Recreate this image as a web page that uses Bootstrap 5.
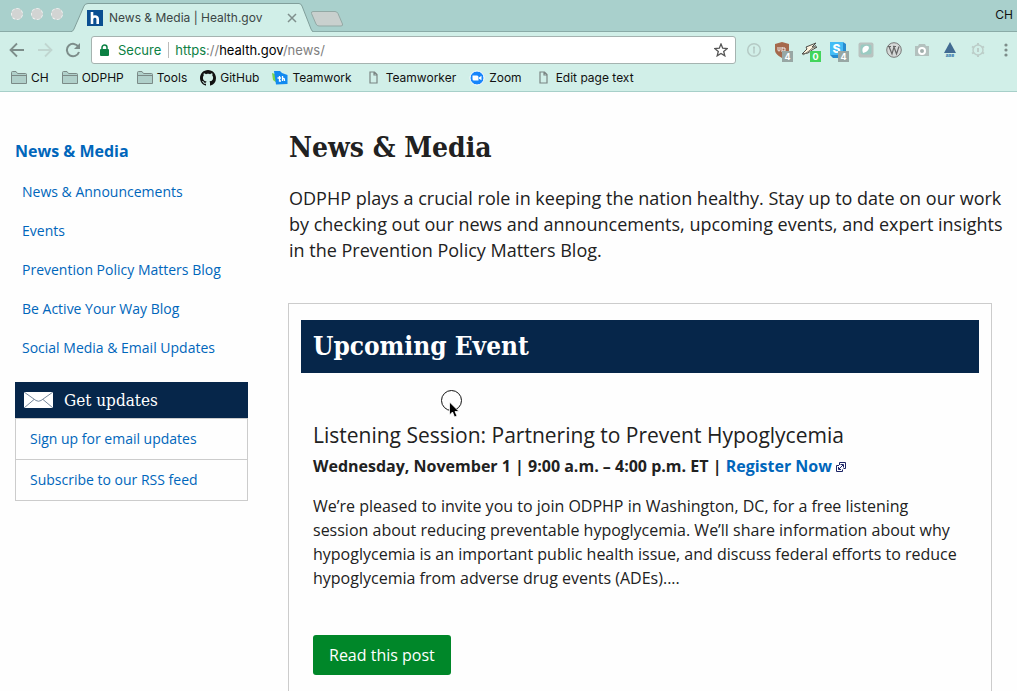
<!DOCTYPE html>
<html lang="en">
<head>
<meta charset="utf-8">
<meta name="viewport" content="width=device-width, initial-scale=1">
<title>News &amp; Media | Health.gov</title>
<link href="https://cdn.jsdelivr.net/npm/bootstrap@5.3.0/dist/css/bootstrap.min.css" rel="stylesheet">
<style>
:root{--navy:#06264a;--link:#0066bb;--mint:#d1efe8;--strip:#a9d0cc;--rule:#ccc;--secure:#0b8043;--serif:"DejaVu Serif Condensed","DejaVu Serif",serif}
body{font-family:"Open Sans","Noto Sans",sans-serif;color:#212121;background:#fefefe}
a{color:var(--link);text-decoration:none}
svg{display:block;flex:none}
.chrome{font-family:Inter,Roboto,sans-serif;font-size:12px;line-height:16px;background:var(--mint);border-bottom:1px solid #a7cfc9;color:#111}
.chrome button{border:0;background:none;padding:0;color:inherit}
.tabstrip{height:32px;background:linear-gradient(var(--strip) 31px,#8aaba7 31px)}
.lights{gap:8px;padding:8px 8px 0 11px}
.chrome .lights button{width:12px;height:12px;border-radius:50%;background:#d2d4d3;border:1px dashed #f1f1f1}
.tab-wrap{width:243px;height:32px}
.tab-wrap .shape{position:absolute;inset:0}
.tab-body{position:relative;padding:10px 17px 0 16px;gap:6px;color:#3b4645}
.chrome .newtab{padding-top:10px;margin-left:-4px}
.profile{padding-top:7px}
.toolbar{height:36px;padding:4px 3px 4px 9px;gap:10px}
.nav-btns{gap:12px;width:72px}
.omnibox{height:28px;background:#fff;border:1px solid #a5b3b0;border-radius:3px;padding:0 7px;font-size:13px}
.secure{color:var(--secure);padding-right:7px;border-right:1px solid #bbb;margin-right:6px}
.url{color:#808080}
.scheme{color:var(--secure)}
.exts{gap:12px}
.bookmarks{height:23px;padding:0 11px 4px;gap:13px}
.bookmarks a{color:#111;gap:4px}
.page-area{scrollbar-width:none}
.layout{padding:39px 25px 0 15px;gap:40px}
.side{width:233px;flex:none;padding-top:8px}
.side h2{font-size:16px;line-height:24px;font-weight:700;margin:0 0 18px}
.side ul{padding-left:7px;margin:0 0 24px;font-size:14px;line-height:21px}
.side li{margin-bottom:18px}
.side li:last-child{margin:0}
.updates{border:1px solid var(--rule);border-width:0 0 1px}
.updates h3{font:500 17px/36px var(--serif);background:var(--navy);color:#fff;margin:0;padding:0 9px;gap:11px}
.updates a{display:block;font-size:14px;line-height:40px;padding:0 14px;border:1px solid var(--rule);border-bottom:0}
h1{font:700 28px/34px var(--serif);margin:0 0 20px;padding-left:1px}
.intro{font-size:18px;line-height:26px;margin:0 -14px 40px 0;padding-left:1px}
.event{border:1px solid var(--rule);padding:16px 12px 40px}
.event h2{font:700 26px/53px var(--serif);background:var(--navy);color:#fff;margin:0 0 46px;padding:0 12px}
.event-body{padding:0 12px}
.event h3{font-size:21px;line-height:32px;font-weight:400;margin:0 0 3px}
.when{font-weight:700;font-size:16px;line-height:24px;margin:0 0 16px}
.blurb{margin:0 0 45px;line-height:24px}
.read{background:#008729;color:#fff;border-radius:3px;padding:8px 16px;line-height:24px;font-weight:500;border:0}
.pointer{position:absolute;left:152px;top:86px}
</style>
</head>
<body class="vh-100 overflow-hidden d-flex flex-column">
<header class="chrome">
  <div class="tabstrip d-flex">
    <div class="lights d-flex"><button aria-label="Close"></button><button aria-label="Minimize"></button><button aria-label="Maximize"></button></div>
    <div class="tab-wrap position-relative">
      <svg class="shape" width="242" height="32" viewBox="0 0 242 32"><path d="M0 32C1 32 2 31 3 29L13 6Q14 3.500 17 3.500H228Q230 3.500 231 6L240 29Q241 31.500 242 32Z" fill="#d1efe8"/><path d="M0 31.500C1 31.500 2 31 3 29L13 6Q14 3.500 17 3.500H228Q230 3.500 231 6L240 29Q241 31.500 242 31.500" fill="none" stroke="#819f9b"/></svg>
      <div class="tab-body d-flex align-items-center">
        <svg width="16" height="16" viewBox="0 0 16 16"><rect width="16" height="16" fill="#0b4f91"/><path d="M5 2v12M5 9Q5.500 6.500 8 6.500T10.700 9V14" fill="none" stroke="#fff" stroke-width="2.600"/></svg>
        <span>News &amp; Media | Health.gov</span>
        <button class="ms-auto" aria-label="Close tab"><svg width="10" height="10" viewBox="0 0 10 10"><path d="M1 1l8 8M9 1L1 9" stroke="#7f8f8c" stroke-width="1.500"/></svg></button>
      </div>
    </div>
    <button class="newtab align-self-start" aria-label="New tab"><svg width="34" height="17" viewBox="0 0 34 17"><path d="M3 1.500H25Q27 1.500 28 3.500L32.500 14Q33 16 31 16H9Q7 16 6 14L1.500 3.500Q1 1.500 3 1.500Z" fill="#c9d0ce" stroke="#93a9a5"/></svg></button>
    <span class="profile ms-auto pe-1">CH</span>
  </div>
  <div class="toolbar d-flex align-items-center">
    <div class="nav-btns d-flex">
      <button aria-label="Back"><svg width="16" height="16" viewBox="0 0 16 16"><path d="M15 8H2M8 1.500L1.500 8L8 14.500" fill="none" stroke="#7d8d8a" stroke-width="1.800"/></svg></button>
      <button aria-label="Forward"><svg width="16" height="16" viewBox="0 0 16 16"><path d="M1 8H14M8 1.500L14.500 8L8 14.500" fill="none" stroke="#c0d6d0" stroke-width="1.800"/></svg></button>
      <button aria-label="Reload"><svg width="16" height="16" viewBox="0 0 16 16"><path d="M13.500 5A6.200 6.200 0 1 0 14 10" fill="none" stroke="#7d8d8a" stroke-width="2"/><path d="M15 1V7H9Z" fill="#7d8d8a"/></svg></button>
    </div>
    <div class="omnibox d-flex align-items-center flex-grow-1">
      <svg class="me-2" width="11" height="12" viewBox="0 0 11 12"><rect x="1" y="5" width="9" height="7" rx="1" fill="#0b8043"/><path d="M3 5V3.500a2.500 2.500 0 0 1 5 0V5" fill="none" stroke="#0b8043" stroke-width="1.500"/></svg>
      <span class="secure">Secure</span>
      <span class="url"><span class="scheme">https</span>://<span class="text-black">health.gov</span>/news/</span>
      <button class="ms-auto" aria-label="Bookmark this page"><svg width="14" height="14" viewBox="0 0 14 14"><path d="M7 1L8.700 5.200L13.200 5.500L9.700 8.400L10.800 12.800L7 10.400L3.200 12.800L4.300 8.400L.8 5.500L5.300 5.200Z" fill="none" stroke="#555" stroke-width="1.300"/></svg></button>
    </div>
    <div class="exts d-flex">
      <button aria-label="Password manager"><svg width="16" height="16" viewBox="0 0 16 16"><circle cx="8" cy="8" r="6.300" fill="none" stroke="#b5cac5" stroke-width="1.500"/><path d="M8 4.500v7M7 5.500h2" fill="none" stroke="#b5cac5" stroke-width="1.500"/></svg></button>
      <button aria-label="Ad blocker"><svg width="16" height="16" viewBox="0 0 16 16" overflow="visible"><path d="M1 2L8 0L15 2V8C15 12 11 14 8 16C5 14 1 12 1 8Z" fill="#a5694c"/><path d="M4 5v3q0 1 1 1t1-1V5M8 5v5M8 6h3v3H8" fill="none" stroke="#eee"/><rect x="8" y="9" width="11" height="11" fill="#98a7a4"/><text x="13.500" y="18" text-anchor="middle" font-size="9" font-weight="700" fill="#fff">4</text></svg></button>
      <button aria-label="Accessibility checker"><svg width="16" height="16" viewBox="0 0 16 16" overflow="visible"><path d="M0 12L5 7L4 5L14 1L10 5L15 5L10 8L6 11Z" fill="#fff5df" stroke="#4c4c47"/><path d="M1 13L7 9L14 3" fill="none" stroke="#77736a"/><rect x="8" y="9" width="11" height="11" fill="#43d55c"/><text x="13.500" y="18" text-anchor="middle" font-size="9" font-weight="700" fill="#fff">0</text></svg></button>
      <button aria-label="Stylesheet tool"><svg width="16" height="16" viewBox="0 0 16 16" overflow="visible"><path d="M0 0H13L16 2V16H3L0 13Z" fill="#278bd0"/><rect width="13" height="13" fill="#44bcf5"/><text x="6.500" y="11" text-anchor="middle" font-size="12" font-weight="800" fill="#fff">S</text><rect x="8" y="9" width="11" height="11" fill="#98a7a4"/><text x="13.500" y="18" text-anchor="middle" font-size="9" font-weight="700" fill="#fff">4</text></svg></button>
      <button aria-label="Note clipper"><svg width="16" height="16" viewBox="0 0 16 16"><rect x=".5" y=".5" width="15" height="15" rx="2" fill="#b9c3c0"/><rect x="2.500" y="2.500" width="11" height="10" rx="2" fill="#9acbc2"/><path d="M5 11Q3 6 7 4Q11 3 11 6Q10 10 5 11Z" fill="#fff"/></svg></button>
      <button aria-label="WordPress"><svg width="16" height="16" viewBox="0 0 16 16"><circle cx="8" cy="8" r="7.300" fill="#d5d8d7" stroke="#777"/><path d="M3 4.500L6 12L8 5L10.500 12L13 4.500M2 4.500h3M7 4.500h3" fill="none" stroke="#666" stroke-width="1.200"/></svg></button>
      <button aria-label="Screenshot"><svg width="16" height="16" viewBox="0 0 16 16"><path d="M1 4H4L5 2H11L12 4H15V14H1Z" fill="#b3c1be"/><circle cx="8" cy="9" r="3" fill="#a1afac" stroke="#fff" stroke-width="2"/></svg></button>
      <button aria-label="axe"><svg width="16" height="16" viewBox="0 0 16 16"><path d="M8 0L14 11H2Z" fill="#416b92"/><text x="8" y="15" text-anchor="middle" font-size="5" font-weight="700" fill="#2a6fa8">axe</text></svg></button>
      <button aria-label="Extension settings"><svg width="16" height="16" viewBox="0 0 16 16"><circle cx="8" cy="8" r="5" fill="none" stroke="#bccdc8" stroke-width="1.500"/><path d="M8 1v2M8 13v2M2 4.500l2 1.200M12 10.300l2 1.200M2 11.500l2-1.200M12 5.700l2-1.200M8 6v4" stroke="#bccdc8" stroke-width="2"/></svg></button>
      <button aria-label="Menu"><svg width="16" height="16" viewBox="0 0 16 16"><g fill="#7d8d8a"><circle cx="8" cy="3" r="1.600"/><circle cx="8" cy="8" r="1.600"/><circle cx="8" cy="13" r="1.600"/></g></svg></button>
    </div>
  </div>
  <svg width="0" height="0" class="position-absolute"><symbol id="folder" viewBox="0 0 16 13"><path d="M.5 12.500V1.500Q.5 .5 1.500 .5H5L6.500 2.500H14.500Q15.500 2.500 15.500 3.500V12.500Z" fill="#b0d0ca" stroke="#7b8a87"/><path d="M1 4.500H15" stroke="#7b8a87"/></symbol><symbol id="sheet" viewBox="0 0 9 13"><path d="M1 1H5.500L8 3.500V12H1ZM5 1V4H8" fill="none" stroke="#7b8583" stroke-width="1.200"/></symbol></svg>
  <nav class="bookmarks d-flex align-items-center" aria-label="Bookmarks">
    <a href="#" class="d-flex align-items-center"><svg width="16" height="13"><use href="#folder"/></svg>CH</a>
    <a href="#" class="d-flex align-items-center"><svg width="16" height="13"><use href="#folder"/></svg>ODPHP</a>
    <a href="#" class="d-flex align-items-center"><svg width="16" height="13"><use href="#folder"/></svg>Tools</a>
    <a href="#" class="d-flex align-items-center"><svg width="16" height="16" viewBox="0 0 16 16"><path fill="#111" d="M8 0C3.580 0 0 3.580 0 8c0 3.540 2.290 6.530 5.470 7.590.4.070.55-.17.55-.38 0-.19-.01-.82-.01-1.490-2.010.37-2.530-.49-2.690-.94-.09-.23-.48-.94-.82-1.130-.28-.15-.68-.52-.01-.53.63-.01 1.080.58 1.230.82.72 1.210 1.870.87 2.330.66.07-.52.28-.87.51-1.070-1.780-.2-3.640-.89-3.640-3.950 0-.87.31-1.590.82-2.150-.08-.2-.36-1.020.08-2.120 0 0 .67-.21 2.200.82.64-.18 1.320-.27 2-.27s1.360.09 2 .27c1.530-1.040 2.200-.82 2.200-.82.44 1.100.16 1.920.08 2.120.51.56.82 1.270.82 2.150 0 3.070-1.870 3.750-3.650 3.950.29.25.54.73.54 1.480 0 1.070-.01 1.930-.01 2.200 0 .21.15.46.55.38A8 8 0 0 0 16 8c0-4.420-3.580-8-8-8z"/></svg>GitHub</a>
    <a href="#" class="d-flex align-items-center"><svg width="16" height="16" viewBox="0 0 16 16"><path d="M0 3L3 4L5 13L1 10Z" fill="#7ad34c"/><path d="M2 1H8L10 3L15.500 5V14L4 14.500Z" fill="#118af0"/><path d="M7.500 6v5h1.500M5.500 8h3.500M10.500 6v5M10.500 9q2-2 2 2" fill="none" stroke="#fff" stroke-width="1.300"/></svg>Teamwork</a>
    <a href="#" class="d-flex align-items-center"><svg class="mx-1" width="9" height="13"><use href="#sheet"/></svg>Teamworker</a>
    <a href="#" class="d-flex align-items-center"><svg width="16" height="16" viewBox="0 0 16 16"><circle cx="8" cy="8" r="7" fill="#1785fb" stroke="#fff"/><path d="M3.500 5.500H8Q9.500 5.500 9.500 7V10.500H5Q3.500 10.500 3.500 9ZM10 7.500L12.500 5.700V10.300L10 8.800Z" fill="#fff"/></svg>Zoom</a>
    <a href="#" class="d-flex align-items-center"><svg class="mx-1" width="9" height="13"><use href="#sheet"/></svg>Edit page text</a>
  </nav>
</header>
<div class="page-area flex-fill overflow-auto">
  <div class="layout d-flex">
    <aside class="side">
      <h2><a href="#">News &amp; Media</a></h2>
      <ul class="list-unstyled">
        <li><a href="#">News &amp; Announcements</a></li>
        <li><a href="#">Events</a></li>
        <li><a href="#">Prevention Policy Matters Blog</a></li>
        <li><a href="#">Be Active Your Way Blog</a></li>
        <li><a href="#">Social Media &amp; Email Updates</a></li>
      </ul>
      <div class="updates">
        <h3 class="d-flex align-items-center"><svg width="29" height="16" viewBox="0 0 29 16"><rect width="29" height="16" fill="#fff"/><path d="M0 0L12 8.500Q14.500 10 17 8.500L29 0M0 16L10 7.500M29 16L19 7.500" fill="none" stroke="#687b91" stroke-width=".9"/></svg>Get updates</h3>
        <a href="#">Sign up for email updates</a>
        <a href="#">Subscribe to our RSS feed</a>
      </div>
    </aside>
    <main class="flex-fill">
      <h1>News &amp; Media</h1>
      <p class="intro">ODPHP plays a crucial role in keeping the nation healthy. Stay up to date on our work by checking out our news and announcements, upcoming events, and expert insights in the Prevention Policy Matters Blog.</p>
      <section class="event position-relative">
        <h2>Upcoming Event</h2>
        <div class="event-body">
          <h3>Listening Session: Partnering to Prevent Hypoglycemia</h3>
          <p class="when">Wednesday, November 1 | 9:00 a.m. – 4:00 p.m. ET | <a href="#">Register Now <svg class="d-inline-block align-baseline" width="10" height="10" viewBox="0 0 10 10"><path d="M3.500 .5H9.500V6.500H7.500M3.500 .5V3M.5 3.500H3M.5 3.500V9.500H6.500V7.500M3 7L7 3M4.500 2.500H7.500V5.500M2.500 5V7.500H5" fill="none" stroke="#1c2466"/></svg></a></p>
          <p class="blurb">We’re pleased to invite you to join ODPHP in Washington, DC, for a free listening session about reducing preventable hypoglycemia. We’ll share information about why hypoglycemia is an important public health issue, and discuss federal efforts to reduce hypoglycemia from adverse drug events (ADEs)....</p>
          <button class="read">Read this post</button>
        </div>
        <svg class="pointer" width="22" height="28" viewBox="0 0 22 28"><circle cx="10.500" cy="10.500" r="10" fill="none" stroke="#111"/><path d="M8.500 12V25L11.500 22L13.500 27L16 26L14 21.500H18Z" fill="#000" stroke="#fff" stroke-width=".8"/></svg>
      </section>
    </main>
  </div>
</div>
<script src="https://cdn.jsdelivr.net/npm/bootstrap@5.3.0/dist/js/bootstrap.bundle.min.js"></script>
</body>
</html>
